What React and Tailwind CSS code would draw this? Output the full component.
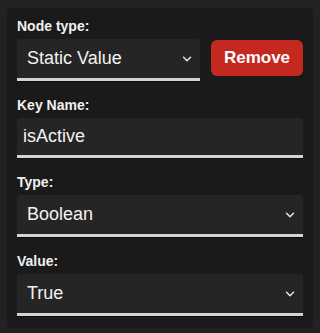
import { ChevronDown } from 'lucide-react';

function Label({ children }) {
  return (
    <div className="text-[14px] leading-[16px] font-semibold text-[#f0f0f0] mb-[5px]">
      {children}
    </div>
  );
}

function Select({ value, className = '' }) {
  return (
    <div
      className={`h-[42px] flex items-center justify-between pl-[10px] pr-[6px] bg-[#252525] rounded-t-[3px] border-b-[3px] border-[#d4d4d4] shadow-[0_1px_0_#0c0c0c] ${className}`}
    >
      <span className="text-[18px] text-[#f2f2f2]">{value}</span>
      <ChevronDown size={14} strokeWidth={2.5} className="text-[#e8e8e8]" />
    </div>
  );
}

export default function App() {
  return (
    <div
      className="min-h-[333px] bg-[#222222] pt-[8px] px-[7px]"
      style={{ fontFamily: '"Liberation Sans", Arial, sans-serif' }}
    >
      <div className="bg-[#1a1a1a] rounded-[4px] px-[10px] pt-[10px] pb-[12px]">
        <Label>Node type:</Label>
        <div className="flex items-start gap-[11px]">
          <Select value="Static Value" className="flex-1" />
          <button className="w-[92px] h-[36px] mt-[1px] rounded-[6px] bg-[#c4281f] text-white text-[17px] font-bold">
            Remove
          </button>
        </div>

        <div className="mt-[16px]">
          <Label>Key Name:</Label>
          <div className="h-[40px] flex items-center pl-[6px] bg-[#252525] rounded-t-[3px] border-b-[3px] border-[#d4d4d4] shadow-[0_1px_0_#0c0c0c]">
            <span className="text-[18px] text-[#f2f2f2]">isActive</span>
          </div>
        </div>

        <div className="mt-[16px]">
          <Label>Type:</Label>
          <Select value="Boolean" />
        </div>

        <div className="mt-[16px]">
          <Label>Value:</Label>
          <Select value="True" />
        </div>
      </div>
    </div>
  );
}
